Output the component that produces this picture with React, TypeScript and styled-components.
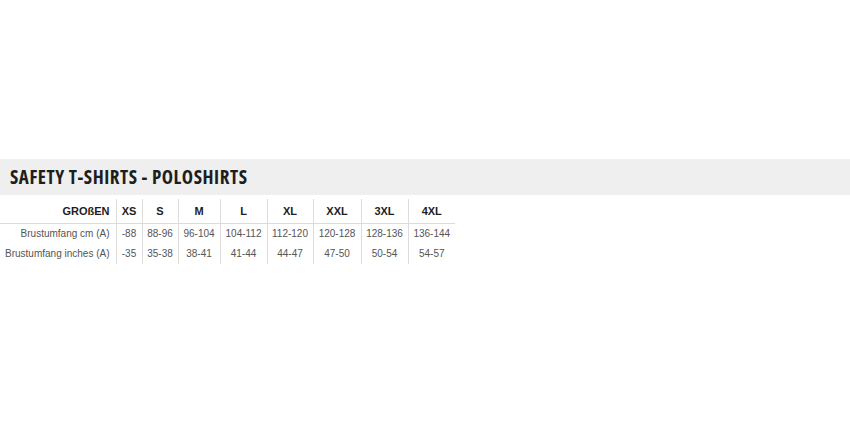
import styled, { createGlobalStyle } from 'styled-components';

const GlobalStyle = createGlobalStyle`
  html, body {
    margin: 0;
    padding: 0;
    background: #ffffff;
  }
`;

export const Page = styled.div`
  width: 850px;
  height: 425px;
  padding-top: 159px;
  box-sizing: border-box;
  background: #ffffff;
`;

export const TitleBand = styled.div`
  height: 36px;
  background-color: #efefef;
  display: flex;
  align-items: center;
  padding-left: 10px;
`;

export const Title = styled.h2`
  margin: 0;
  font-family: 'Open Sans', sans-serif;
  font-weight: 700;
  font-size: 19px;
  font-stretch: 85%;
  letter-spacing: 0.55px;
  color: #1e1e1e;
  white-space: nowrap;
`;

export const SizeTable = styled.table`
  margin-top: 4px;
  border-collapse: collapse;
  table-layout: fixed;
  font-family: 'Liberation Sans', Arial, sans-serif;
`;

export const HeadCell = styled.th<{ $w: number; $label?: boolean }>`
  width: ${(p) => p.$w}px;
  height: 24px;
  padding: 0 ${(p) => (p.$label ? '6px' : '0')} 0 0;
  box-sizing: border-box;
  text-align: ${(p) => (p.$label ? 'right' : 'center')};
  font-size: 11px;
  font-weight: bold;
  color: #1e1e1e;
  border-bottom: 1px solid #dcdcdc;
  border-left: ${(p) => (p.$label ? 'none' : '1px solid #dcdcdc')};
`;

export const Cell = styled.td<{ $label?: boolean }>`
  height: 20px;
  padding: 0 ${(p) => (p.$label ? '6px' : '0')} 0 0;
  text-align: ${(p) => (p.$label ? 'right' : 'center')};
  font-size: 10px;
  color: #555;
  white-space: nowrap;
  border-left: ${(p) => (p.$label ? 'none' : '1px solid #dcdcdc')};
`;

const sizes = [
  { name: 'XS', w: 26 },
  { name: 'S', w: 36 },
  { name: 'M', w: 42 },
  { name: 'L', w: 47 },
  { name: 'XL', w: 46 },
  { name: 'XXL', w: 48 },
  { name: '3XL', w: 47 },
  { name: '4XL', w: 47 },
];

const rows = [
  {
    label: 'Brustumfang cm (A)',
    values: ['-88', '88-96', '96-104', '104-112', '112-120', '120-128', '128-136', '136-144'],
  },
  {
    label: 'Brustumfang inches (A)',
    values: ['-35', '35-38', '38-41', '41-44', '44-47', '47-50', '50-54', '54-57'],
  },
];

function App() {
  return (
    <Page>
      <GlobalStyle />
      <TitleBand>
        <Title>SAFETY T-SHIRTS - POLOSHIRTS</Title>
      </TitleBand>
      <SizeTable>
        <thead>
          <tr>
            <HeadCell $w={116} $label>
              GROßEN
            </HeadCell>
            {sizes.map((s) => (
              <HeadCell key={s.name} $w={s.w}>
                {s.name}
              </HeadCell>
            ))}
          </tr>
        </thead>
        <tbody>
          {rows.map((r) => (
            <tr key={r.label}>
              <Cell $label>{r.label}</Cell>
              {r.values.map((v, i) => (
                <Cell key={i}>{v}</Cell>
              ))}
            </tr>
          ))}
        </tbody>
      </SizeTable>
    </Page>
  );
}

export default App;
